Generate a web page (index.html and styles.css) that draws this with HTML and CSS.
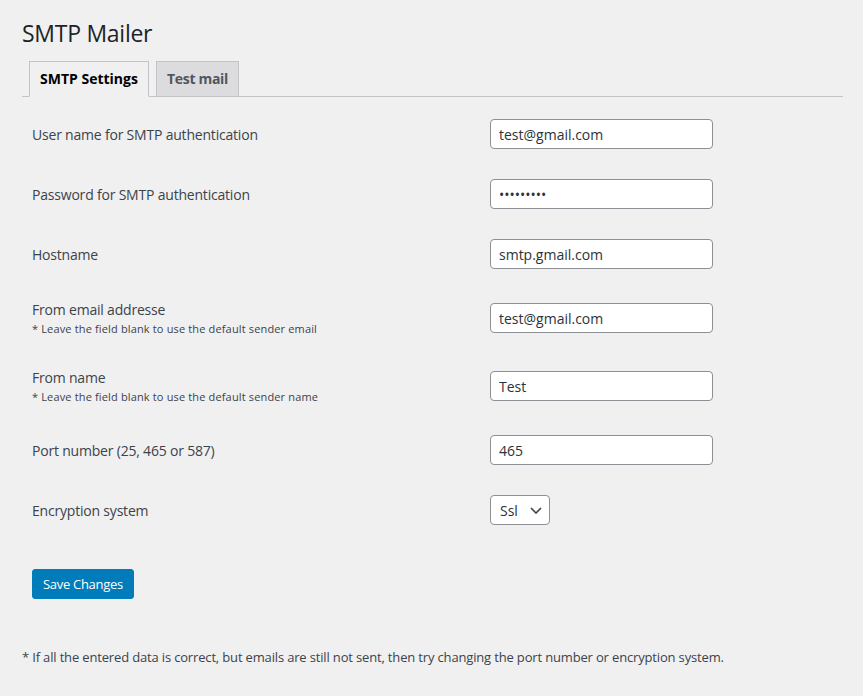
FILE: index.html
```html
<!DOCTYPE html>
<html lang="en">
<head>
<meta charset="utf-8">
<title>SMTP Mailer</title>
<link rel="stylesheet" href="styles.css">
</head>
<body>
<div class="wrap">
  <h1 class="title">SMTP Mailer</h1>
  <nav class="tabs">
    <a class="tab tab-active" href="#">SMTP Settings</a>
    <a class="tab" href="#">Test mail</a>
  </nav>
  <form class="settings">
    <div class="row">
      <div class="label-cell"><label>User name for SMTP authentication</label></div>
      <div class="field-cell"><input class="text-input" type="text" value="test@gmail.com"></div>
    </div>
    <div class="row">
      <div class="label-cell"><label>Password for SMTP authentication</label></div>
      <div class="field-cell"><input class="text-input" type="password" value="123456789"></div>
    </div>
    <div class="row">
      <div class="label-cell"><label>Hostname</label></div>
      <div class="field-cell"><input class="text-input" type="text" value="smtp.gmail.com"></div>
    </div>
    <div class="row">
      <div class="label-cell"><label>From email addresse</label><span class="desc">* Leave the field blank to use the default sender email</span></div>
      <div class="field-cell"><input class="text-input" type="text" value="test@gmail.com"></div>
    </div>
    <div class="row">
      <div class="label-cell"><label>From name</label><span class="desc">* Leave the field blank to use the default sender name</span></div>
      <div class="field-cell"><input class="text-input" type="text" value="Test"></div>
    </div>
    <div class="row">
      <div class="label-cell"><label>Port number (25, 465 or 587)</label></div>
      <div class="field-cell"><input class="text-input" type="text" value="465"></div>
    </div>
    <div class="row">
      <div class="label-cell"><label>Encryption system</label></div>
      <div class="field-cell">
        <span class="select-wrap">
          <select class="select"><option>Ssl</option><option>Tls</option></select>
          <svg class="chevron" width="12" height="7" viewBox="0 0 12 7"><path d="M1 1l5 5 5-5" fill="none" stroke="#3c434a" stroke-width="1.6"/></svg>
        </span>
      </div>
    </div>
    <div class="actions">
      <button class="button-primary" type="button">Save Changes</button>
    </div>
  </form>
  <p class="note">* If all the entered data is correct, but emails are still not sent, then try changing the port number or encryption system.</p>
</div>
</body>
</html>
```

FILE: styles.css
```css
html, body {
  margin: 0;
  padding: 0;
  background: #f0f0f1;
}
body {
  font-family: "Open Sans", "Noto Sans", sans-serif;
  color: #3c434a;
  font-size: 14px;
}
.wrap {
  margin: 0 20px 0 22px;
  padding-top: 18px;
}
.title {
  margin: 0;
  font-size: 23px;
  font-weight: 400;
  line-height: 30px;
  letter-spacing: -0.27px;
  color: #1d2327;
}
.tabs {
  display: flex;
  align-items: flex-end;
  margin-top: 13px;
  border-bottom: 1px solid #c3c4c7;
  height: 35px;
}
.tab {
  display: block;
  margin-left: 7px;
  padding: 5px 10px;
  line-height: 24px;
  height: 24px;
  font-size: 14px;
  font-weight: 700;
  letter-spacing: -0.3px;
  text-decoration: none;
  color: #50575e;
  background: #dcdcde;
  border: 1px solid #c3c4c7;
  border-bottom: none;
}
.tab-active {
  color: #000;
  background: #f0f0f1;
  border-bottom: 1px solid #f0f0f1;
  margin-bottom: -1px;
  letter-spacing: 0;
}
.settings {
  margin-top: 7px;
}
.row {
  display: grid;
  grid-template-columns: 468px 1fr;
  align-items: center;
  padding: 15px 0;
}
.label-cell {
  padding-left: 10px;
  display: flex;
  flex-direction: column;
}
.label-cell label {
  line-height: 20px;
  font-size: 14px;
  letter-spacing: -0.2px;
  color: #3c434a;
  position: relative;
  top: 1px;
}
.desc {
  font-size: 11px;
  line-height: 18px;
  letter-spacing: 0.15px;
  color: #3c434a;
  position: relative;
  top: 1px;
}
.text-input {
  box-sizing: border-box;
  width: 223px;
  height: 30px;
  margin: 0;
  padding: 0 8px;
  border: 1px solid #8c8f94;
  border-radius: 4px;
  background: #fff;
  font-family: inherit;
  font-size: 14px;
  color: #2c3338;
  outline: none;
}
.select-wrap {
  position: relative;
  display: inline-block;
  vertical-align: top;
}
.select {
  box-sizing: border-box;
  width: 60px;
  height: 30px;
  margin: 0;
  padding: 0 24px 0 9px;
  border: 1px solid #8c8f94;
  border-radius: 4px;
  background: #fff;
  font-family: inherit;
  font-size: 14px;
  color: #2c3338;
  -webkit-appearance: none;
  appearance: none;
  outline: none;
  display: block;
}
.chevron {
  position: absolute;
  left: 40px;
  top: 12px;
  pointer-events: none;
}
.actions {
  padding: 29px 0 0 10px;
}
.button-primary {
  box-sizing: border-box;
  height: 30px;
  padding: 0 10px;
  margin: 0;
  border: 1px solid #007cba;
  border-radius: 3px;
  background: #007cba;
  color: #fff;
  font-family: inherit;
  font-size: 13px;
  letter-spacing: -0.3px;
  line-height: 28px;
  cursor: pointer;
}
.note {
  margin: 48px 0 0;
  font-size: 13px;
  line-height: 20px;
  letter-spacing: -0.16px;
  color: #3c434a;
}
```
